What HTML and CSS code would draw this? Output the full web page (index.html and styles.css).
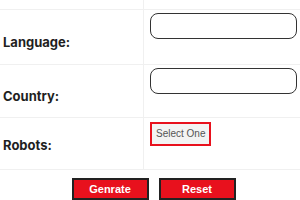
FILE: index.html
```html
<!DOCTYPE html>
<html>
  <head>
    <title>Robots Generator</title>
    <link rel="stylesheet" href="styles.css">
  </head>
  <body>
    <div class="form-grid">
      <div class="cell label-cell row-top"></div>
      <div class="cell field-cell row-top"></div>

      <div class="cell label-cell row-language">Language:</div>
      <div class="cell field-cell row-language">
        <input type="text" class="text-input" />
      </div>

      <div class="cell label-cell row-country">Country:</div>
      <div class="cell field-cell row-country">
        <input type="text" class="text-input" />
      </div>

      <div class="cell label-cell row-robots">Robots:</div>
      <div class="cell field-cell row-robots">
        <div class="select-box">Select One</div>
      </div>
    </div>

    <div class="actions">
      <button class="button">Genrate</button>
      <button class="button">Reset</button>
    </div>
  </body>
</html>
```

FILE: styles.css
```css
:root {
  --line-color: #f0f0f0;
  --red: #e8111d;
  --text-primary: #1f1f1f;
}

body {
  margin: 0;
  font-family: Inter, "Noto Sans", sans-serif;
  background-color: white;
  overflow: hidden;
}

.form-grid {
  display: grid;
  grid-template-columns: 144px 1fr;
  grid-template-rows: 10px 55px 53px 52px;
}

.cell {
  box-sizing: border-box;
  border-bottom: 1px solid var(--line-color);
}

.label-cell {
  display: flex;
  align-items: center;
  padding: 9px 0 0 3px;
  border-right: 1px solid var(--line-color);
  font-size: 13px;
  font-weight: 700;
  color: var(--text-primary);
}

.row-top {
  padding: 0;
}

.row-robots.label-cell {
  padding-top: 3px;
}

.field-cell {
  padding: 3px 0 0 6px;
}

.text-input {
  display: block;
  box-sizing: border-box;
  width: 147px;
  height: 26px;
  border: 1.5px solid #333;
  border-radius: 8px;
  background-color: white;
}

.select-box {
  display: inline-block;
  margin-top: 0;
  padding: 4px 4px;
  border: 2px solid var(--red);
  background-color: #f3f3f3;
  font-family: "Liberation Sans", Arial, sans-serif;
  font-size: 10px;
  line-height: 12px;
  color: #555;
}

.actions {
  display: flex;
  justify-content: center;
  gap: 10px;
  padding: 8px 0 0 7px;
}

.button {
  box-sizing: border-box;
  width: 77px;
  height: 22px;
  padding: 0;
  border: 2.5px solid #222;
  background-color: var(--red);
  color: white;
  font-family: "Liberation Sans", Arial, sans-serif;
  font-size: 11px;
  font-weight: 700;
}
```
